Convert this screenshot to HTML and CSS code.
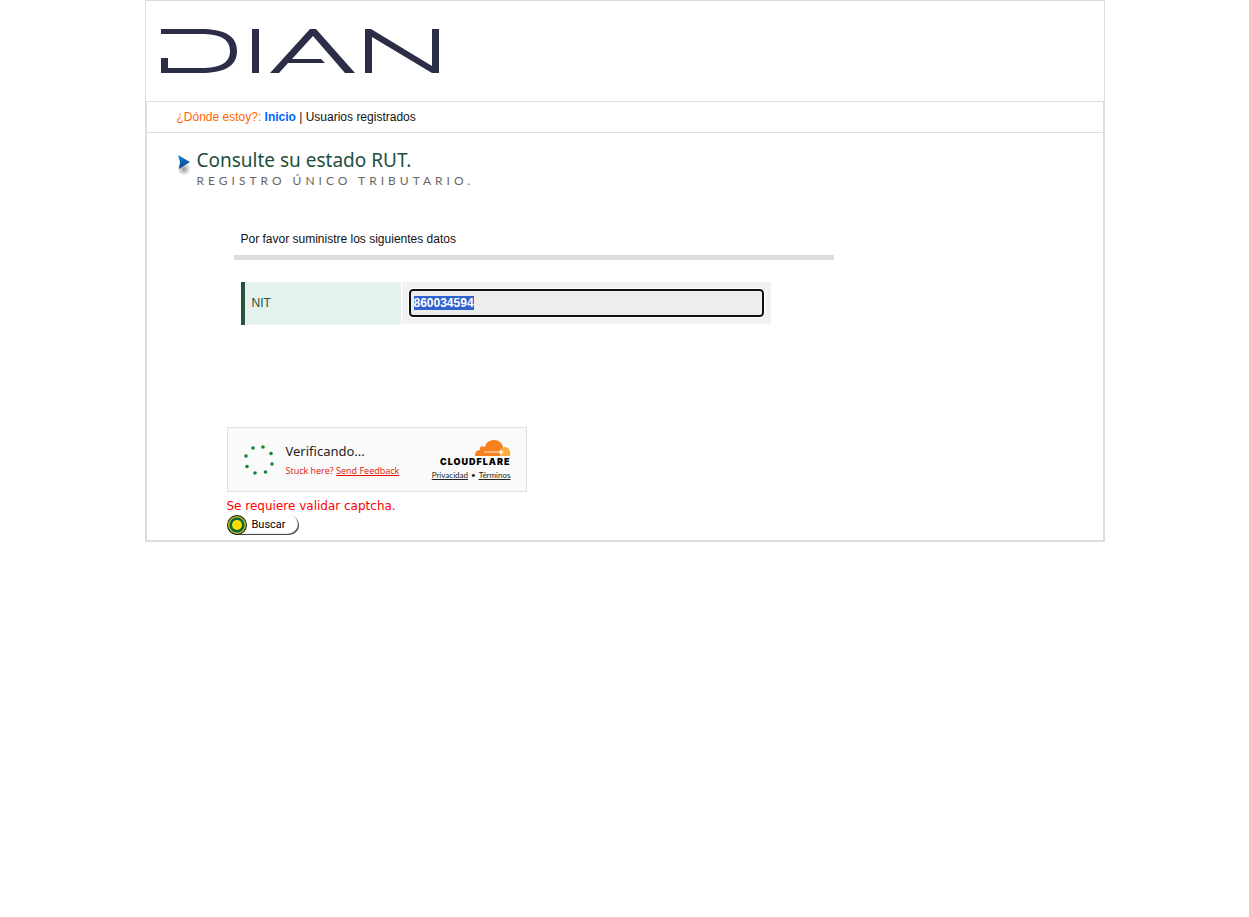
FILE: index.html
```html
<!DOCTYPE html>
<html lang="es">
<head>
<meta charset="utf-8">
<title>Consulte su estado RUT</title>
<link rel="stylesheet" href="styles.css">
</head>
<body>
<div class="page">
  <header class="header">
    <svg class="logo" viewBox="0 0 278 44" role="img" aria-label="DIAN">
      <path d="M0 0H40C62 0 76 6 76 22S62 44 40 44H0V29H7V39H40C59 39 69 34 69 22S59 5 40 5H0Z"/>
      <rect x="91" width="7" height="44"/>
      <path d="M109 44 149 0H155L194 44H184L152 7 131 30H160L164 34H127L118 44Z"/>
      <path d="M204 0H210L271 37V0H278V44H271L211 8V44H204Z"/>
    </svg>
  </header>
  <div class="body">
    <nav class="crumbs"><span class="where">¿Dónde estoy?:</span> <a class="home" href="#">Inicio</a> | Usuarios registrados</nav>
    <main class="main">
      <div class="heading">
        <svg class="arrow" viewBox="0 0 14 22" aria-hidden="true">
          <defs>
            <linearGradient id="blue" x1="0" y1="0" x2="0" y2="1"><stop offset="0" stop-color="#1684cf"/><stop offset="1" stop-color="#073c88"/></linearGradient>
            <radialGradient id="shade"><stop offset="0" stop-color="#777" stop-opacity=".8"/><stop offset="1" stop-color="#999" stop-opacity="0"/></radialGradient>
          </defs>
          <ellipse cx="6" cy="15" rx="7" ry="7" fill="url(#shade)"/>
          <path d="M0 1 12 8 1 15 2 8Z" fill="url(#blue)"/>
        </svg>
        <div>
          <h1 class="title">Consulte su estado RUT.</h1>
          <p class="subtitle">REGISTRO ÚNICO TRIBUTARIO.</p>
        </div>
      </div>
      <form class="form">
        <p class="intro">Por favor suministre los siguientes datos</p>
        <div class="row">
          <label class="row-label" for="nit">NIT</label>
          <div class="row-field"><input class="nit" id="nit" type="text" value="860034594"></div>
        </div>
        <section class="captcha">
          <svg class="spinner" viewBox="0 0 32 32" aria-hidden="true">
            <circle cx="10" cy="4" r="1.8"/><circle cx="20" cy="3" r="1.8"/><circle cx="28" cy="9.5" r="1.8"/><circle cx="29" cy="20" r="1.8"/><circle cx="22.500" cy="28" r="1.8"/><circle cx="12" cy="29" r="1.8"/><circle cx="4" cy="22.500" r="1.8"/><circle cx="3" cy="12" r="1.8"/>
          </svg>
          <div class="status">
            <span class="verifying">Verificando...</span>
            <span class="stuck">Stuck here? <a class="feedback" href="#">Send Feedback</a></span>
          </div>
          <div class="brand">
            <svg class="cloud" viewBox="0 0 36 16" aria-hidden="true">
              <path fill="#f6821f" d="M0 16C0 12 2 10 5 10 4 7 7 5 10 7 11 2 15 0 19 0 24 0 27 3 28 7 28 9 26 11 25 16Z"/>
              <path fill="#fbad41" d="M25 16C27 11 27 7 30 7 34 7 36 11 35 16Z"/>
              <path fill="#fff" fill-opacity=".8" d="M9 11.500 24 11.500 26 9 27 11 29 12 27 13 26 15 24 12.500 9 12.500Z"/>
            </svg>
            <span class="wordmark">CLOUDFLARE</span>
            <span class="terms"><a href="#">Privacidad</a><span>•</span><a href="#">Términos</a></span>
          </div>
        </section>
        <p class="error">Se requiere validar captcha.</p>
        <button class="search" type="button">
          <svg class="target" viewBox="0 0 20 20" aria-hidden="true"><circle cx="10" cy="10" r="10" fill="#15231c"/><circle cx="10" cy="10" r="9" fill="#c4b51d"/><circle cx="10" cy="10" r="7.500" fill="#006b3c"/><circle cx="10" cy="10" r="5" fill="#ffdc00"/></svg>
          <span>Buscar</span>
        </button>
      </form>
    </main>
  </div>
</div>
<script src="focus.js"></script>
</body>
</html>
```
FILE: styles.css
```css
* { box-sizing: border-box; }
body { margin: 0; background: #fff; color: #111; font: 12px/16px "Liberation Sans", Arial, sans-serif; }
p, h1 { margin: 0; font-weight: 400; }
.page { max-width: 960px; margin: 0 auto; border: 1px solid #ddd; }
.header { padding: 28px 15px; }
.logo { display: block; width: 278px; height: 44px; fill: #2c2d47; }
.body { border: 1px solid #ddd; }
.crumbs { padding: 7px 30px; border-bottom: 1px solid #ddd; }
.where { color: #f60; }
.home { color: #06f; font-weight: 700; text-decoration: none; }
.main { padding: 15px 30px 5px; }
.heading { display: flex; gap: 5px; }
.arrow { width: 14px; height: 22px; margin: 6px 0 0 1px; }
.title { color: #1e4f3c; font: 19px/24px "Noto Sans", sans-serif; }
.subtitle { padding-top: 1px; color: #666; font: 12px/16px Lato, sans-serif; letter-spacing: 4px; }
.form { padding-left: 50px; }
.intro { max-width: 600px; margin: 42px 0 22px 7px; padding: 0 7px 8px; border-bottom: 5px solid #ddd; }
.row { display: flex; align-items: flex-start; gap: 1px; width: 530px; max-width: 100%; margin-left: 14px; }
.row-label { width: 160px; padding: 13px 7px 14px; border-left: 4px solid #26543f; background: #e4f1ec; color: #265440; }
.row-field { flex: 1; padding: 7px; background: #f2f2f2; }
.nit { display: block; width: 100%; height: 28px; padding: 0 3px; border: 2px solid #101010; border-radius: 4px; outline: 1px solid #fff; background: #ededed; color: #333; font: bold 12px/18px "Liberation Sans", Arial, sans-serif; }
.nit::selection { background: #3063cf; color: #fff; }
.captcha { display: flex; align-items: center; width: 300px; height: 65px; margin-top: 102px; padding: 0 15px; border: 1px solid #e0e0e0; background: #fafafa; }
.spinner { width: 32px; height: 32px; fill: #138636; }
.status { display: flex; flex-direction: column; margin-left: 11px; font-family: "Noto Sans", sans-serif; }
.verifying { padding-top: 2px; color: #232323; font-size: 13px; line-height: 20px; }
.stuck { color: #de1303; font: 9px/20px "Open Sans", sans-serif; }
.feedback { color: inherit; }
.brand { display: flex; flex-direction: column; align-items: flex-end; margin-left: auto; padding-top: 2px; }
.cloud { width: 36px; height: 16px; }
.wordmark { color: #000; font: 900 9px/12px Inter, sans-serif; letter-spacing: 1px; }
.terms { display: flex; gap: 3px; color: #232323; font: 8px/14px Lato, sans-serif; }
.terms a { color: inherit; }
.error { margin-top: 5px; color: #f00; font: 12px/18px "DejaVu Sans", Verdana, sans-serif; }
.search { display: flex; align-items: center; gap: 5px; width: 72px; height: 20px; padding: 0; border: 0; border-radius: 10px; background: #fff; box-shadow: inset -1px -1px 1px #333; color: #000; font: 11px/16px Roboto, sans-serif; }
.target { width: 20px; height: 20px; }
```
FILE: focus.js
```js
const nit = document.getElementById("nit");
nit.focus();
nit.select();
```
